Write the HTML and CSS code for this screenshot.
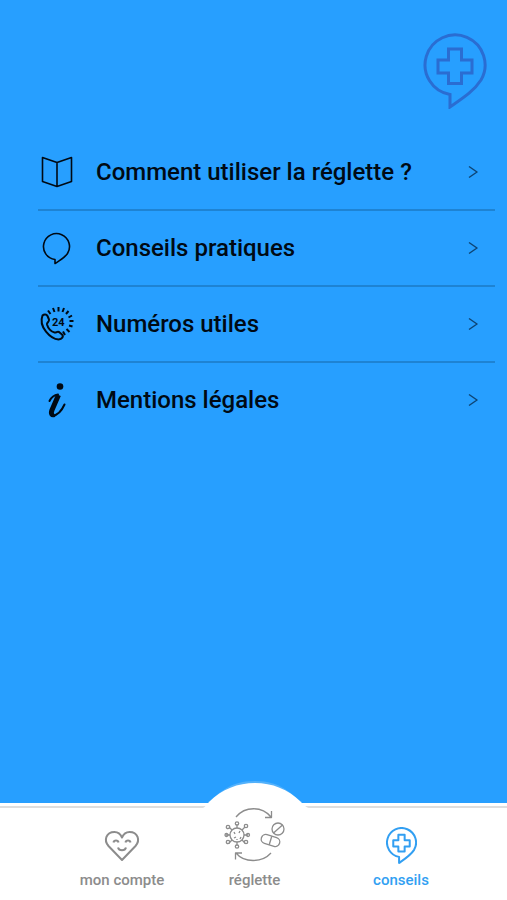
FILE: index.html
```html
<!DOCTYPE html>
<html lang="fr">
<head>
<meta charset="utf-8">
<meta name="viewport" content="width=device-width, initial-scale=1">
<title>Conseils</title>
<link rel="stylesheet" href="styles.css">
</head>
<body>
<svg class="defs" aria-hidden="true">
  <symbol id="care" viewBox="0 0 64 76">
    <path vector-effect="non-scaling-stroke" d="M27 61.500A30 30 0 1 1 58 47C51 58 40 65 27 74Z"/>
    <path vector-effect="non-scaling-stroke" d="M25.500 16H38.500V27H49V40H38.500V50.500H25.500V40H15V27H25.500Z"/>
  </symbol>
  <symbol id="chevron" viewBox="0 0 10 14"><path d="M1 1.500 9 7 1 12.500"/></symbol>
</svg>

<header class="header">
  <svg class="logo" aria-hidden="true"><use href="#care"/></svg>
</header>

<main class="main">
  <ul class="menu">
    <li class="menu-item"><a class="menu-link" href="#reglette">
      <svg class="icon" viewBox="0 0 38 38" aria-hidden="true"><path d="M4.500 4.500 19 9.500 33.500 4.500V28.500L19 33.500 4.500 28.500ZM19 9.500V33.500"/></svg>
      <span class="label">Comment utiliser la réglette ?</span>
      <svg class="chevron" aria-hidden="true"><use href="#chevron"/></svg>
    </a></li>
    <li class="menu-item"><a class="menu-link" href="#pratiques">
      <svg class="icon" viewBox="0 0 38 38" aria-hidden="true"><path d="M17 30.500A13 13 0 1 1 29.500 24.500C26.500 29 22 31 17 34.500Z"/></svg>
      <span class="label">Conseils pratiques</span>
      <svg class="chevron" aria-hidden="true"><use href="#chevron"/></svg>
    </a></li>
    <li class="menu-item"><a class="menu-link" href="#numeros">
      <svg class="icon" viewBox="0 0 38 38" aria-hidden="true">
        <path class="handset" d="M4.500 10.500C6 9 8.500 9 9.500 11L11 14.500C11.500 17 8.500 17.500 9 19.500C10 23 13 27 16.500 27.500C18.500 28 19 26 21 27L24 29.500C26 31.500 24 34 20.500 34.500C13 34 0 22 4.500 10.500Z"/>
        <path class="rays" d="M10 5.500 12.500 9M15 3 16.500 7M20.500 2V6.500M26 3 24.500 7M30.500 6 28 9M34 10.500 30.500 12.500M35.500 16H31.500M34.500 21.500 31 20.500M31.500 27 28.500 24M27 30 25 26.500"/>
        <text class="phone-number" x="14" y="21">24</text>
      </svg>
      <span class="label">Numéros utiles</span>
      <svg class="chevron" aria-hidden="true"><use href="#chevron"/></svg>
    </a></li>
    <li class="menu-item"><a class="menu-link" href="#mentions">
      <svg class="icon" viewBox="0 0 38 38" aria-hidden="true">
        <circle class="solid" cx="22" cy="5.500" r="3.300"/>
        <path class="stem" d="M20.500 14 14 29C12.500 33 14 34.500 16.500 33.500"/>
        <path class="hook" d="M11.500 20C13.500 16 16 14 20 13.500M15 34.500C20 34 24 29 26.500 23.500"/>
      </svg>
      <span class="label">Mentions légales</span>
      <svg class="chevron" aria-hidden="true"><use href="#chevron"/></svg>
    </a></li>
  </ul>
</main>

<nav class="tabs" aria-label="Navigation principale">
  <svg class="bump" viewBox="0 0 112 30" aria-hidden="true">
    <path class="bump-halo" d="M8 22C20 14 28 1 55 1S90 14 102 22Z"/>
    <path class="bump-fill" d="M0 28.500C5 28.500 5 26 9 22C22 9 38 3 55 3S88 9 101 22C105 26 107 28.500 112 28.500V30H0Z"/>
  </svg>
  <a class="tab" href="#compte">
    <svg class="tab-icon" viewBox="0 0 62 56" aria-hidden="true">
      <path d="M31 52 17.500 38C12.500 32.500 15 24 23.500 24C27 24 29.500 26 31 29.500C32.500 26 35 24 38.500 24C47 24 49.500 32.500 44.500 38Z"/>
      <path d="M22.500 34.500C23 31.800 27 31.800 27.500 34.500M34.500 34.500C35 31.800 39 31.800 39.500 34.500M27 39.500C28 43.200 34 43.200 35 39.500"/>
    </svg>
    <span>mon compte</span>
  </a>
  <a class="tab" href="#reglette-tab">
    <svg class="tab-icon thin" viewBox="0 0 62 56" aria-hidden="true">
      <path d="M12 9C21-2 38-2 47 9M47.500 3V9.500H41M47 45C38 55 20 55 12 45M11.500 51.500V45H18"/>
      <circle cx="13" cy="27" r="7"/>
      <path d="M13 20V16M13 34V38M6 27H2M20 27H24M8 22 5 19M18 22 21 19M8 32 5 35M18 32 21 35M10 24 11 26M16 23 15 25M10 30 12 29M17 29 16 31M13 31V32"/>
      <circle cx="13" cy="15.500" r="1.700"/><circle cx="13" cy="38.500" r="1.700"/><circle cx="2.500" cy="27" r="1.500"/><circle cx="24" cy="27" r="1.500"/><circle cx="4" cy="19" r="1.700"/><circle cx="22" cy="18" r="1.700"/><circle cx="4" cy="34" r="1.700"/><circle cx="22" cy="34" r="1.700"/>
      <circle cx="54" cy="21" r="6"/><path d="M49.500 25 58.500 17"/>
      <rect x="37" y="28" width="19" height="9" rx="4.500" transform="rotate(17 46.500 32.500)"/><path d="M47.800 28.200 45.200 36.800"/>
    </svg>
    <span>réglette</span>
  </a>
  <a class="tab current" href="#conseils" aria-current="page">
    <span class="tab-icon care-box"><svg class="care-small" aria-hidden="true"><use href="#care"/></svg></span>
    <span>conseils</span>
  </a>
</nav>
</body>
</html>
```

FILE: styles.css
```css
* { box-sizing: border-box; }

body {
  margin: 0;
  min-height: 100vh;
  display: flex;
  flex-direction: column;
  background: #279fff;
  color: #000a14;
  font-family: Roboto, "Noto Sans", sans-serif;
}

svg {
  display: block;
  flex: none;
  fill: none;
  stroke: currentColor;
  stroke-linejoin: round;
}

.defs { position: absolute; width: 0; height: 0; }

.header {
  display: flex;
  justify-content: flex-end;
  padding: 33px 20px 26px;
}

.logo {
  width: 64px;
  height: 76px;
  color: #2a6dd2;
  stroke-width: 3px;
  stroke-linejoin: miter;
}

.main {
  flex: 1;
  padding: 0 12px 0 38px;
}

.menu {
  list-style: none;
  margin: 0;
  padding: 0;
}

.menu-item { border-bottom: 2px solid #1e83d3; }
.menu-item:last-child { border-bottom: 0; }

.menu-link {
  display: flex;
  align-items: center;
  height: 74px;
  padding-right: 17px;
  color: inherit;
  text-decoration: none;
}

.icon {
  width: 38px;
  height: 38px;
  margin-right: 20px;
  stroke-width: 1.6px;
}

.handset { stroke-width: 2px; }
.rays { stroke-width: 2px; }
.stem { stroke-width: 5px; }
.hook { stroke-width: 2px; stroke-linecap: round; }

.phone-number {
  font: bold 11px "Roboto", sans-serif;
  fill: currentColor;
  stroke: none;
}

.solid { fill: currentColor; stroke: none; }

.label {
  flex: 1;
  font-size: 24px;
  font-weight: 500;
  line-height: 32px;
}

.chevron {
  width: 10px;
  height: 14px;
  color: #0e4474;
  stroke-width: 1.5px;
}

.tabs {
  position: relative;
  display: grid;
  grid-template-columns: 144fr 121fr 172fr;
  padding: 5px 20px 8px 50px;
  background: linear-gradient(#fff 3px, #dedede 3px, #dedede 5px, #fff 5px);
}

.bump {
  position: absolute;
  left: 50%;
  top: -23px;
  width: 112px;
  height: 30px;
  margin-left: -54px;
  stroke: none;
}

.bump-halo { fill: #53b1fb; }
.bump-fill { fill: #fff; }

.tab {
  position: relative;
  display: flex;
  flex-direction: column;
  align-items: center;
  gap: 4px;
  color: #8c8c8c;
  font-size: 15px;
  font-weight: 500;
  line-height: 24px;
  text-decoration: none;
}

.tab-icon {
  width: 62px;
  height: 56px;
  stroke-width: 2px;
}

.thin { stroke-width: 1.3px; }

.current { color: #329ff2; }

.care-box {
  display: flex;
  justify-content: center;
  align-items: flex-end;
}

.care-small {
  width: 31px;
  height: 37px;
  stroke-width: 2px;
}
```
